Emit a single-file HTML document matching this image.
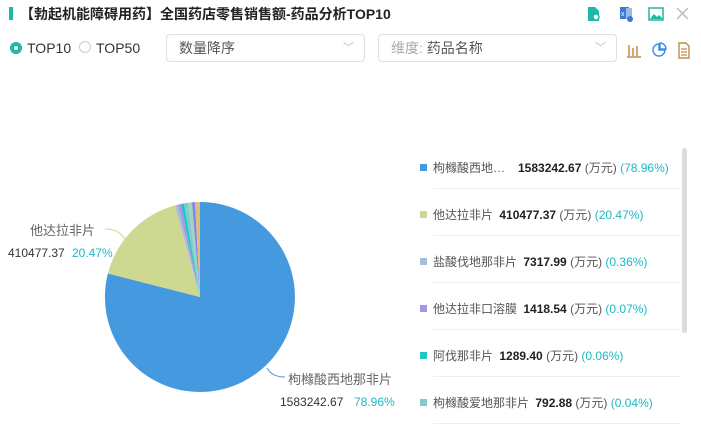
<!DOCTYPE html>
<html><head><meta charset="utf-8"><style>
body{margin:0;width:701px;height:427px;background:#fff;font-family:"Liberation Sans","Noto Sans CJK SC",sans-serif;position:relative;overflow:hidden;color:#333}
.a{position:absolute;white-space:nowrap}
.sel{position:absolute;border:1px solid #dcdfe6;border-radius:4px;height:28px;top:34px;box-sizing:border-box;font-size:14px;line-height:26px;padding-left:12px;color:#555}
.row{position:absolute;left:420px;font-size:12px;height:20px;line-height:20px;white-space:nowrap;color:#555}
.sq{display:inline-block;width:7px;height:7px;margin-right:6px;vertical-align:1px}
.row b{color:#222;margin-left:3px}
.p{color:#1fb8c3}
.ln{position:absolute;left:433px;width:247px;height:1px;background:#eee}
</style></head><body>
<div class="a" style="left:9px;top:7px;width:4px;height:13px;background:#1fb8a4"></div>
<div class="a" style="left:20px;top:4px;font-size:14px;font-weight:bold;color:#222">【勃起机能障碍用药】全国药店零售销售额-药品分析TOP10</div>
<svg class="a" style="left:585px;top:5px" width="110" height="18" viewBox="0 0 110 18">
<path d="M3 2h7l4 4v10H3z" fill="#1fb8a4"/><circle cx="11" cy="12" r="3" fill="#fff" stroke="#1fb8a4" stroke-width="1.5"/>
<rect x="35" y="2" width="9" height="12" fill="#3a79d6"/><rect x="41" y="3" width="6" height="11" fill="#9bbbe8"/><text x="36" y="11" font-size="7" fill="#fff" font-family="Liberation Sans">x</text><circle cx="45" cy="14" r="3" fill="#3a79d6"/>
<rect x="64" y="3" width="14" height="12" fill="none" stroke="#1fb8a4" stroke-width="1.5"/><path d="M65 14l4-5 3 3 2-2 4 4z" fill="#1fb8a4"/>
<path d="M92 3l11 11M103 3L92 14" stroke="#bbb" stroke-width="1.5"/>
</svg>
<div class="a" style="left:10px;top:42px;width:12px;height:12px;border-radius:50%;background:#1fb8a4"></div>
<div class="a" style="left:14px;top:46px;width:4px;height:4px;border-radius:50%;background:#fff"></div>
<div class="a" style="left:27px;top:40px;font-size:14px;color:#333">TOP10</div>
<div class="a" style="left:79px;top:41px;width:12px;height:12px;border-radius:50%;border:1px solid #ccc;box-sizing:border-box"></div>
<div class="a" style="left:96px;top:40px;font-size:14px;color:#333">TOP50</div>
<div class="sel" style="left:166px;width:199px">数量降序<span style="position:absolute;right:10px;color:#bbb;font-size:11px">﹀</span></div>
<div class="sel" style="left:378px;width:239px"><span style="color:#aaa">维度:</span> 药品名称<span style="position:absolute;right:10px;color:#bbb;font-size:11px">﹀</span></div>
<svg class="a" style="left:625px;top:41px" width="68" height="18" viewBox="0 0 68 18">
<path d="M2 16h14M4 15V4M8 15V7M12 15V5" stroke="#c58a4a" stroke-width="1.5" fill="none"/>
<path d="M34 3a6 6 0 1 0 6 6h-6z" fill="none" stroke="#3a8ee6" stroke-width="1.4"/><path d="M35 2a6 6 0 0 1 6 6h-6z" fill="none" stroke="#3a8ee6" stroke-width="1.4"/>
<path d="M54 2h7l3 3v12H54z" fill="none" stroke="#c58a4a" stroke-width="1.4"/><path d="M56 8h6M56 11h6M56 14h6" stroke="#c58a4a" stroke-width="1.2"/>
</svg>
<svg class="a" style="left:0;top:0" width="420" height="427">
<path d="M200 297L200 202A95 95 0 1 1 107.9 273.5Z" fill="#4599de"/>
<path d="M200 297L107.9 273.5A95 95 0 0 1 175 205.4Z" fill="#cdd891"/>
<path d="M200 297L175 205.4A95 95 0 0 1 178 204.6Z" fill="#a7bedb"/>
<path d="M200 297L178 204.6A95 95 0 0 1 181 204Z" fill="#a895e8"/>
<path d="M200 297L181 204A95 95 0 0 1 184 203.4Z" fill="#1fc6c2"/>
<path d="M200 297L184 203.4A95 95 0 0 1 188 202.8Z" fill="#82c9d0"/>
<path d="M200 297L188 202.8A95 95 0 0 1 192 202.3Z" fill="#9cd8c0"/>
<path d="M200 297L192 202.3A95 95 0 0 1 195 202.1Z" fill="#8c7fe8"/>
<path d="M200 297L195 202.1A95 95 0 0 1 200 202Z" fill="#d8c27a"/>
<path d="M125 240Q120 229 105 229" stroke="#cdd891" fill="none"/>
<path d="M267 368Q272 377 285 377" stroke="#4599de" fill="none"/>
<text x="30" y="235" font-size="13" fill="#666">他达拉非片</text>
<text x="8" y="257" font-size="12" fill="#333">410477.37</text><text x="72" y="257" font-size="12" fill="#1fb8c3">20.47%</text>
<text x="288" y="384" font-size="13" fill="#666">枸橼酸西地那非片</text>
<text x="280" y="406" font-size="12" fill="#333">1583242.67</text><text x="354" y="406" font-size="12" fill="#1fb8c3">78.96%</text>
</svg>
<div class="a" style="left:682px;top:148px;width:5px;height:185px;border-radius:3px;background:#ddd"></div>
<div class="row" style="top:158px"><span class="sq" style="background:#4599de"></span><span style="display:inline-block;width:82px">枸橼酸西地…</span><b>1583242.67</b> (万元) <span class="p">(78.96%)</span></div>
<div class="ln" style="top:188px"></div>
<div class="row" style="top:205px"><span class="sq" style="background:#cdd891"></span>他达拉非片 <b>410477.37</b> (万元) <span class="p">(20.47%)</span></div>
<div class="ln" style="top:235px"></div>
<div class="row" style="top:252px"><span class="sq" style="background:#a7bedb"></span>盐酸伐地那非片 <b>7317.99</b> (万元) <span class="p">(0.36%)</span></div>
<div class="ln" style="top:282px"></div>
<div class="row" style="top:299px"><span class="sq" style="background:#a895e8"></span>他达拉非口溶膜 <b>1418.54</b> (万元) <span class="p">(0.07%)</span></div>
<div class="ln" style="top:329px"></div>
<div class="row" style="top:346px"><span class="sq" style="background:#1fc6c2"></span>阿伐那非片 <b>1289.40</b> (万元) <span class="p">(0.06%)</span></div>
<div class="ln" style="top:376px"></div>
<div class="row" style="top:393px"><span class="sq" style="background:#82c9d0"></span>枸橼酸爱地那非片 <b>792.88</b> (万元) <span class="p">(0.04%)</span></div>
<div class="ln" style="top:423px"></div>
</body></html>
